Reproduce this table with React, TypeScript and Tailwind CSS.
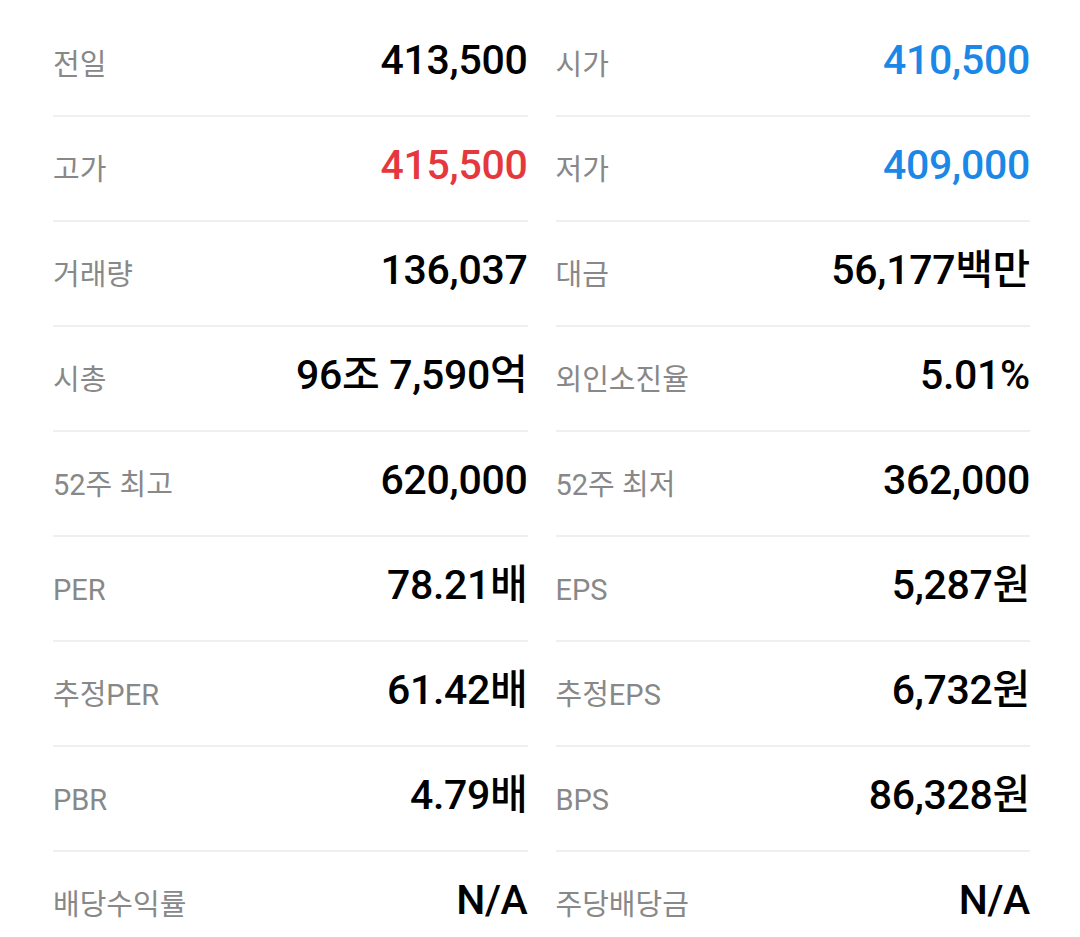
import React from "react";

type Cell = { label: string; value: string; color?: string };

const rows: [Cell, Cell][] = [
  [
    { label: "전일", value: "413,500" },
    { label: "시가", value: "410,500", color: "text-[#1b87e6]" },
  ],
  [
    { label: "고가", value: "415,500", color: "text-[#e5383d]" },
    { label: "저가", value: "409,000", color: "text-[#1b87e6]" },
  ],
  [
    { label: "거래량", value: "136,037" },
    { label: "대금", value: "56,177백만" },
  ],
  [
    { label: "시총", value: "96조 7,590억" },
    { label: "외인소진율", value: "5.01%" },
  ],
  [
    { label: "52주 최고", value: "620,000" },
    { label: "52주 최저", value: "362,000" },
  ],
  [
    { label: "PER", value: "78.21배" },
    { label: "EPS", value: "5,287원" },
  ],
  [
    { label: "추정PER", value: "61.42배" },
    { label: "추정EPS", value: "6,732원" },
  ],
  [
    { label: "PBR", value: "4.79배" },
    { label: "BPS", value: "86,328원" },
  ],
  [
    { label: "배당수익률", value: "N/A" },
    { label: "주당배당금", value: "N/A" },
  ],
];

function CellView({ c, last }: { c: Cell; last: boolean }) {
  return (
    <div className="flex flex-col">
      <div className="flex h-[103px] items-center justify-between">
        <span className="text-[29px] text-[#888888] leading-none pt-[4px]">{c.label}</span>
        <span
          className={`text-[41px] font-medium leading-none tracking-[-0.3px] pb-[6px] ${c.color ?? "text-black"}`}
        >
          {c.value}
        </span>
      </div>
      {!last && <div className="h-[2px] bg-[#efefef]" />}
    </div>
  );
}

export default function App() {
  return (
    <div
      className="h-[937px] w-[1080px] overflow-hidden bg-white pl-[53px] pr-[50px] pt-[12px]"
      style={{ fontFamily: 'Roboto, "Noto Sans CJK KR", sans-serif' }}
    >
      <div className="grid grid-cols-2 gap-x-[28px]">
        {rows.map((r, i) => (
          <React.Fragment key={i}>
            <CellView c={r[0]} last={i === rows.length - 1} />
            <CellView c={r[1]} last={i === rows.length - 1} />
          </React.Fragment>
        ))}
      </div>
    </div>
  );
}
